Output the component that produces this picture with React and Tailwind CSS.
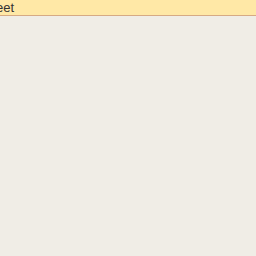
export default function App() {
  return (
    <div className="w-[256px] h-[256px] bg-[#f0ede6] overflow-hidden" style={{ fontFamily: '"Liberation Sans", Arial, sans-serif' }}>
      <div className="h-[16px] bg-[#ffe8a6] border-b border-[#d6aa84] flex items-center overflow-hidden text-[13px] leading-none text-[#333]">
        <span className="-ml-[4px] -mt-[1px] whitespace-nowrap">eet</span>
      </div>
    </div>
  );
}
